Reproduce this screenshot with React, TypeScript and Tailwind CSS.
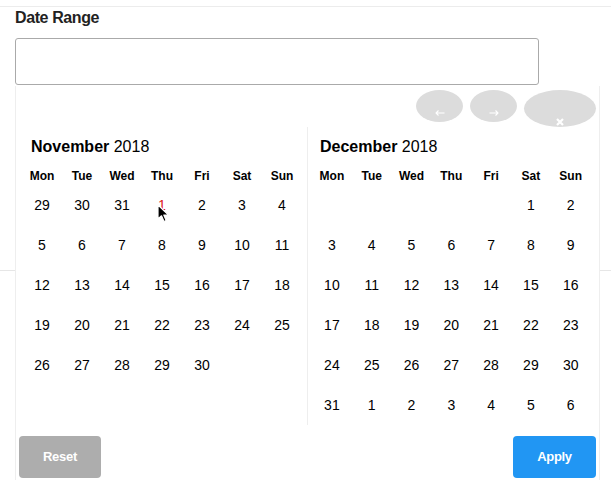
const nov = [
  [29, 30, 31, 1, 2, 3, 4],
  [5, 6, 7, 8, 9, 10, 11],
  [12, 13, 14, 15, 16, 17, 18],
  [19, 20, 21, 22, 23, 24, 25],
  [26, 27, 28, 29, 30, 0, 0],
]

const dec = [
  [0, 0, 0, 0, 0, 1, 2],
  [3, 4, 5, 6, 7, 8, 9],
  [10, 11, 12, 13, 14, 15, 16],
  [17, 18, 19, 20, 21, 22, 23],
  [24, 25, 26, 27, 28, 29, 30],
  [31, 1, 2, 3, 4, 5, 6],
]

const days = ['Mon', 'Tue', 'Wed', 'Thu', 'Fri', 'Sat', 'Sun']

function Month({ name, rows, titleOffset, colWidth, today }: { name: string; rows: number[][]; titleOffset: string; colWidth: string; today?: boolean }) {
  return (
    <div>
      <div className={`h-[20px] mt-[10px] text-[16px] leading-[20px] text-black ${titleOffset}`}>
        <span className="font-bold">{name}</span> 2018
      </div>
      <div className="flex mt-[10px] h-[18px] items-center">
        {days.map((d) => (
          <div key={d} className={`${colWidth} text-center text-[12px] font-bold text-black`}>
            {d}
          </div>
        ))}
      </div>
      {rows.map((r, i) => (
        <div key={i} className="flex h-[40px] items-center">
          {r.map((n, j) => (
            <div
              key={j}
              className={`${colWidth} text-center text-[14px] ${today && i === 0 && n === 1 ? 'text-[#e02020] relative' : 'text-black'}`}
            >
              {n > 0 ? n : ''}
              {today && i === 0 && n === 1 && (
                <svg className="absolute left-[15px] top-[9px]" width="13" height="19" viewBox="0 0 13 19">
                  <path d="M1 1 L1 15 L4.5 11.8 L7 17.5 L9.2 16.5 L6.8 11 L11.5 11 Z" fill="black" stroke="white" strokeWidth="1.2" strokeLinejoin="round" />
                </svg>
              )}
            </div>
          ))}
        </div>
      ))}
    </div>
  )
}

export default function App() {
  return (
    <div className="relative w-[611px] h-[480px] overflow-hidden bg-white" style={{ fontFamily: '"Liberation Sans", Arial, sans-serif' }}>
      <div className="pt-[6px]">
        <div className="border-t border-[#ececec]"></div>
        <div className="pl-[15px] pt-[1px] text-[16px] leading-[20px] font-bold text-[#222] tracking-[-0.4px]">Date Range</div>
        <div className="ml-[15px] mt-[10px] w-[524px] h-[47px] border border-[#aaa] rounded-[3px]"></div>
        <div className="mt-[185px] border-t border-[#e6e6e6]"></div>
      </div>

      {/* Picker popup */}
      <div className="absolute left-[15px] top-[86px] w-[585px] h-[400px] bg-white border-x border-[#eee]">
        <div className="h-[41px] flex justify-end items-start pt-[4px] pr-[3px] gap-[7px]">
          <div className="w-[47px] h-[32px] rounded-[50%] bg-[#dcdcdc] flex items-end justify-center pb-[6px]">
            <svg width="10" height="6" viewBox="0 0 10 6">
              <path d="M9.5 3 H1 M3.5 0.5 L1 3 L3.5 5.5" stroke="white" strokeWidth="1.1" fill="none" />
            </svg>
          </div>
          <div className="w-[47px] h-[32px] rounded-[50%] bg-[#dcdcdc] flex items-end justify-center pb-[6px]">
            <svg width="10" height="6" viewBox="0 0 10 6">
              <path d="M0.5 3 H9 M6.5 0.5 L9 3 L6.5 5.5" stroke="white" strokeWidth="1.1" fill="none" />
            </svg>
          </div>
          <div className="w-[72px] h-[37px] rounded-[50%] bg-[#dcdcdc] flex items-end justify-center pb-[1px]">
            <svg width="8" height="8" viewBox="0 0 8 8">
              <path d="M1 1 L7 7 M7 1 L1 7" stroke="white" strokeWidth="2.2" />
            </svg>
          </div>
        </div>
        <div className="flex">
          <div className="w-[292px] border-r border-[#eee] pl-[6px] pb-[4px]">
            <Month name="November" rows={nov} titleOffset="ml-[9px]" colWidth="w-[40px]" today />
          </div>
          <div className="pl-[4px]">
            <Month name="December" rows={dec} titleOffset="ml-[8px]" colWidth="w-[39.8px]" />
          </div>
        </div>
        <div className="flex justify-between px-[3px] mt-[11px]">
          <button className="w-[82px] h-[42px] rounded-[4px] bg-[#adadad] text-white text-[13px] font-bold tracking-[-0.3px]">Reset</button>
          <button className="w-[83px] h-[42px] rounded-[4px] bg-[#2196f3] text-white text-[13px] font-bold tracking-[-0.3px]">Apply</button>
        </div>
      </div>
    </div>
  )
}
